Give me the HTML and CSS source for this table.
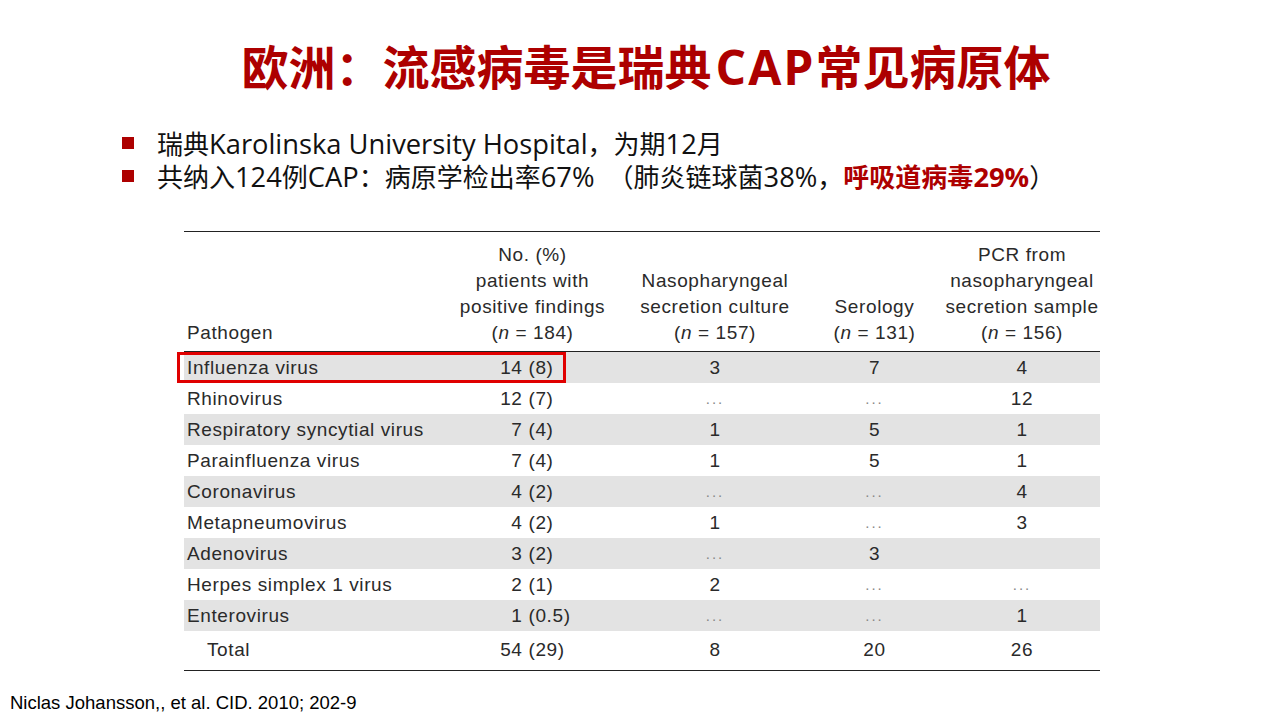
FILE: index.html
```html
<!DOCTYPE html>
<html lang="zh-CN">
<head>
<meta charset="utf-8">
<title>欧洲：流感病毒是瑞典CAP常见病原体</title>
<link rel="stylesheet" href="styles.css">
</head>
<body>
<div class="slide">
  <h1 class="title">欧洲：流感病毒是瑞典<span class="en">CAP</span>常见病原体</h1>
  <ul class="bullets">
    <li><span class="txt">瑞典<span class="en">Karolinska University Hospital</span>，为期<span class="en">12</span>月</span></li>
    <li><span class="txt">共纳入<span class="en">124</span>例<span class="en">CAP</span>：病原学检出率<span class="en">67%</span>　（肺炎链球菌<span class="en">38%</span>，<span class="hl">呼吸道病毒<span class="en">29%</span></span>）</span></li>
  </ul>
  <div class="table-wrap">
    <table class="data">
      <colgroup>
        <col class="c1"><col class="c2"><col class="c3"><col class="c4"><col class="c5">
      </colgroup>
      <thead>
        <tr>
          <th class="left">Pathogen</th>
          <th>No. (%)<br>patients with<br>positive findings<br>(<i>n</i> = 184)</th>
          <th>Nasopharyngeal<br>secretion culture<br>(<i>n</i> = 157)</th>
          <th>Serology<br>(<i>n</i> = 131)</th>
          <th>PCR from<br>nasopharyngeal<br>secretion sample<br>(<i>n</i> = 156)</th>
        </tr>
      </thead>
      <tbody>
        <tr class="alt"><td class="left">Influenza virus</td><td><span class="n">14</span><span class="p">(8)</span></td><td>3</td><td>7</td><td>4</td></tr>
        <tr><td class="left">Rhinovirus</td><td><span class="n">12</span><span class="p">(7)</span></td><td class="dots">...</td><td class="dots">...</td><td>12</td></tr>
        <tr class="alt"><td class="left">Respiratory syncytial virus</td><td><span class="n">7</span><span class="p">(4)</span></td><td>1</td><td>5</td><td>1</td></tr>
        <tr><td class="left">Parainfluenza virus</td><td><span class="n">7</span><span class="p">(4)</span></td><td>1</td><td>5</td><td>1</td></tr>
        <tr class="alt"><td class="left">Coronavirus</td><td><span class="n">4</span><span class="p">(2)</span></td><td class="dots">...</td><td class="dots">...</td><td>4</td></tr>
        <tr><td class="left">Metapneumovirus</td><td><span class="n">4</span><span class="p">(2)</span></td><td>1</td><td class="dots">...</td><td>3</td></tr>
        <tr class="alt"><td class="left">Adenovirus</td><td><span class="n">3</span><span class="p">(2)</span></td><td class="dots">...</td><td>3</td><td></td></tr>
        <tr><td class="left">Herpes simplex 1 virus</td><td><span class="n">2</span><span class="p">(1)</span></td><td>2</td><td class="dots">...</td><td class="dots">...</td></tr>
        <tr class="alt"><td class="left">Enterovirus</td><td><span class="n">1</span><span class="p">(0.5)</span></td><td class="dots">...</td><td class="dots">...</td><td>1</td></tr>
        <tr class="total"><td class="left indent">Total</td><td><span class="n">54</span><span class="p">(29)</span></td><td>8</td><td>20</td><td>26</td></tr>
      </tbody>
    </table>
    <div class="highlight-box"></div>
  </div>
  <p class="cite">Niclas Johansson,, et al. CID. 2010; 202-9</p>
</div>
</body>
</html>
```

FILE: styles.css
```css
html, body {
  margin: 0;
  padding: 0;
  background: #ffffff;
}

.slide {
  width: 1280px;
  height: 720px;
  position: relative;
  overflow: hidden;
  font-family: "Noto Sans CJK SC", "Noto Sans", sans-serif;
  color: #111;
}

.title {
  margin: 0;
  padding: 33px 0 0 12px;
  height: 64px;
  line-height: 64px;
  text-align: center;
  font-size: 47px;
  font-weight: 700;
  color: #ad0000;
  white-space: nowrap;
}

.title .en {
  font-family: "Open Sans", "Noto Sans", sans-serif;
  font-size: 48px;
  font-weight: 700;
  letter-spacing: 2px;
  line-height: 64px;
  padding-left: 4px;
}

.bullets {
  list-style: none;
  margin: 29px 0 0 0;
  padding: 0 0 0 122px;
}

.bullets li {
  display: flex;
  align-items: center;
  height: 33px;
  font-size: 26px;
  line-height: 33px;
  color: #111;
  white-space: nowrap;
}

.bullets li::before {
  content: "";
  display: block;
  width: 12px;
  height: 12px;
  background: #ad0000;
  margin-right: 23px;
  flex: none;
}

.bullets .en {
  font-family: "Open Sans", "Noto Sans", sans-serif;
  font-size: 27.3px;
  line-height: 33px;
  white-space: pre;
}

.hl {
  color: #ad0000;
  font-weight: 700;
}

.table-wrap {
  position: relative;
  width: 916px;
  margin: 39px 0 0 184px;
}

.data {
  width: 916px;
  border-collapse: collapse;
  table-layout: fixed;
  font-family: "Liberation Sans", Arial, sans-serif;
  font-size: 19px;
  letter-spacing: 0.6px;
  color: #2a2a2a;
  border-top: 1.5px solid #222;
  border-bottom: 1.5px solid #222;
}

.c1 { width: 256px; }
.c2 { width: 185px; }
.c3 { width: 180px; }
.c4 { width: 139px; }
.c5 { width: 156px; }

.data thead th {
  font-weight: 400;
  line-height: 26px;
  vertical-align: bottom;
  text-align: center;
  padding: 10px 0 5px 0;
  border-bottom: 1.5px solid #222;
  white-space: nowrap;
}

.data th.left,
.data td.left {
  text-align: left;
  padding-left: 3px;
}

.data td.indent {
  padding-left: 23px;
}

.data tbody td {
  height: 31px;
  padding: 0;
  text-align: center;
  line-height: 31px;
  white-space: nowrap;
}

.data tbody tr.alt td {
  background: #e3e3e3;
}

.data tbody tr.total td {
  height: 37px;
  padding-bottom: 2px;
}

.n {
  display: inline-block;
  width: 80px;
  text-align: right;
}

.p {
  display: inline-block;
  width: 100px;
  text-align: left;
  padding-left: 6px;
  box-sizing: border-box;
}

.data td.dots {
  color: #888;
  font-size: 15px;
  letter-spacing: 2px;
}

.data i {
  font-style: italic;
}

.highlight-box {
  position: absolute;
  left: -7px;
  top: 121px;
  width: 383px;
  height: 25px;
  border: 3px solid #e00000;
}

.cite {
  position: absolute;
  left: 10px;
  top: 692px;
  margin: 0;
  font-family: "Liberation Sans", Arial, sans-serif;
  font-size: 18.5px;
  line-height: 22px;
  color: #000;
}
```
